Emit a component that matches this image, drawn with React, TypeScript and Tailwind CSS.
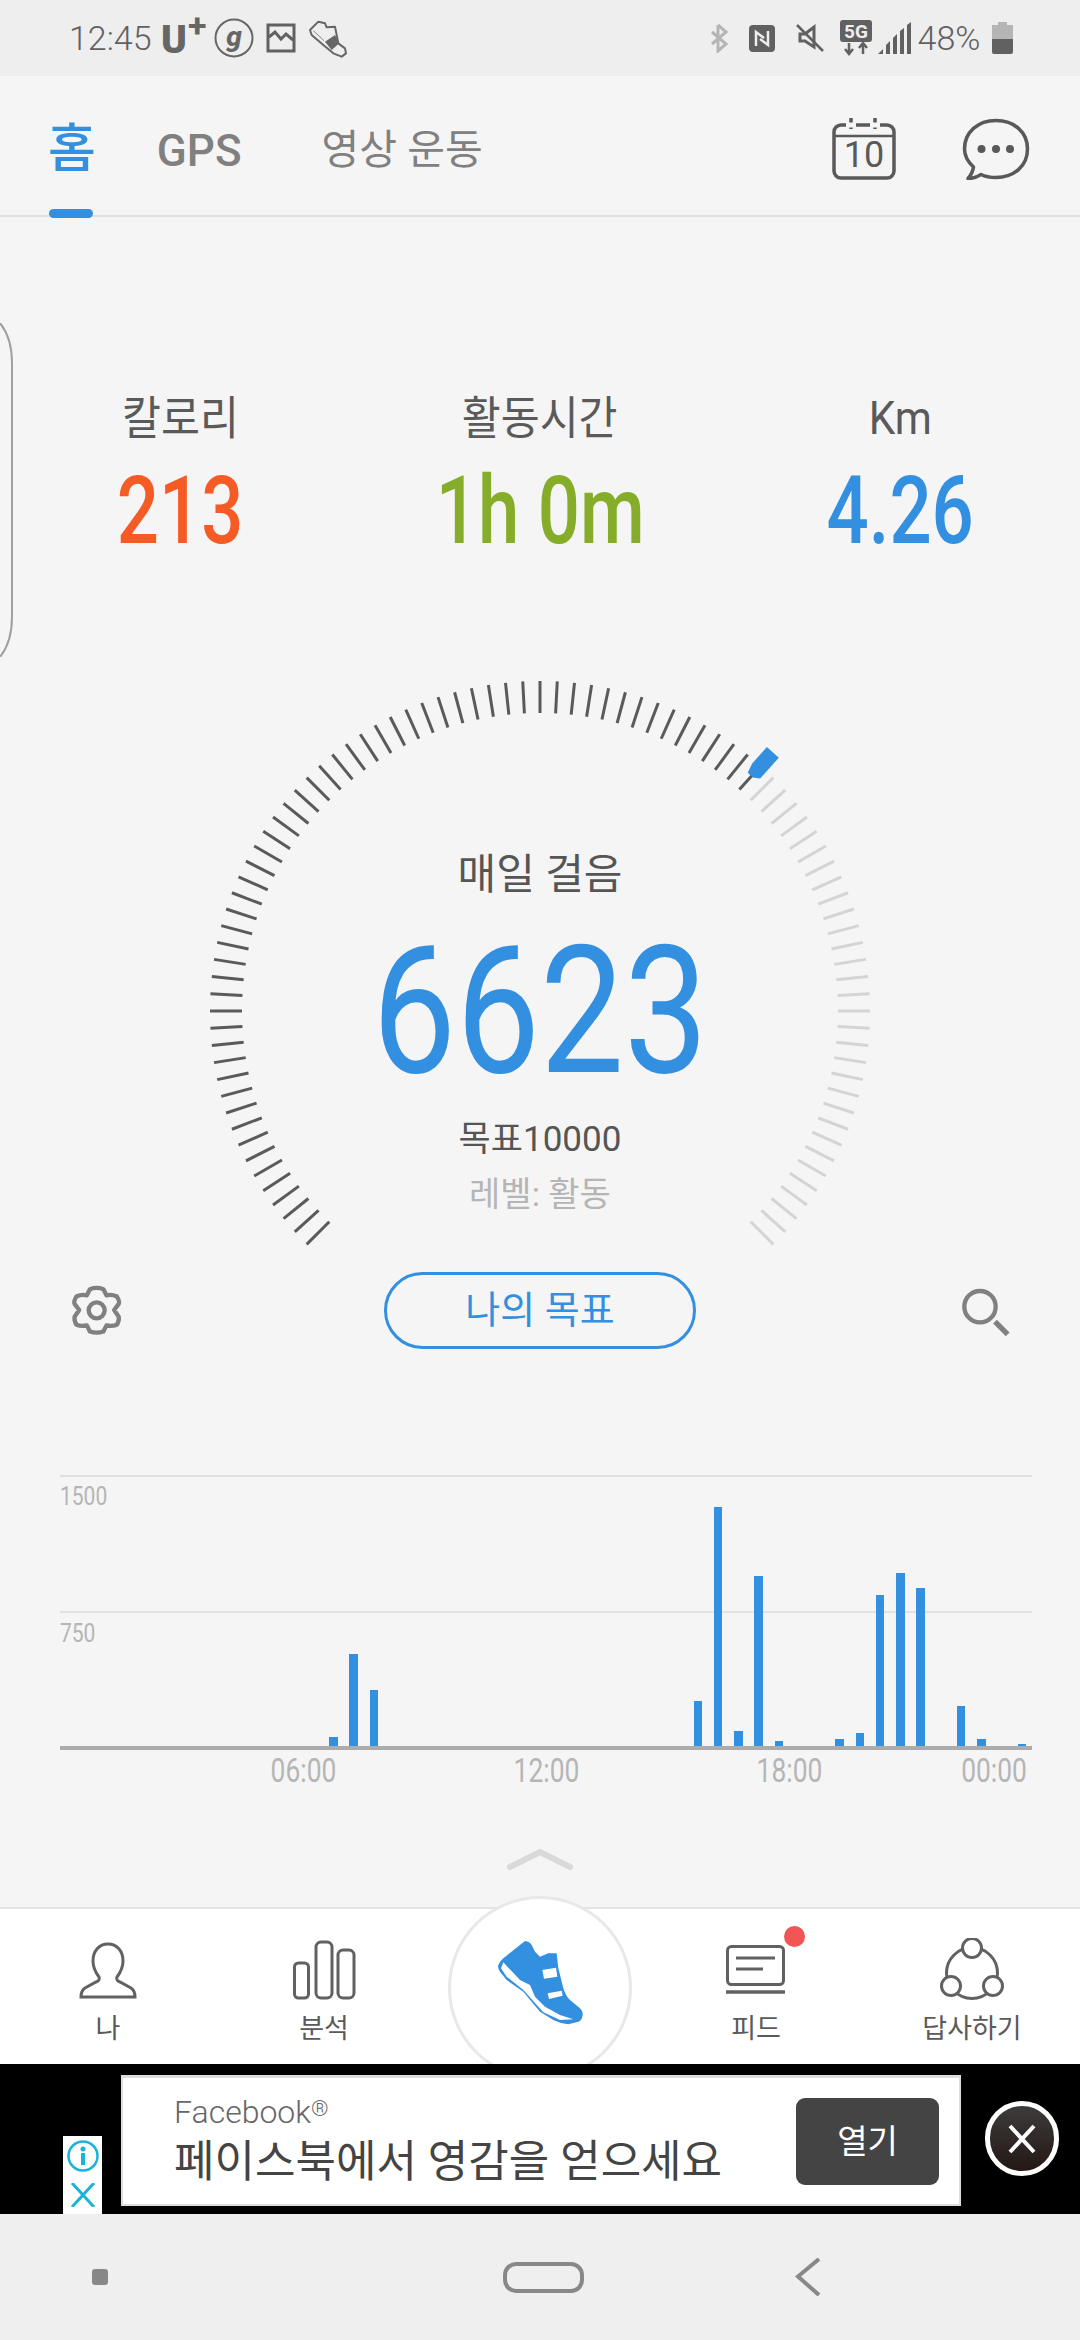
const blue = '#338fe0';

// index of half-hour slot, top of bar in page px (baseline is 1746)
const bars: [number, number][] = [
  [13, 1737], [14, 1654], [15, 1690], [31, 1701], [32, 1507], [33, 1731], [34, 1576], [35, 1741],
  [38, 1739], [39, 1733], [40, 1595], [41, 1573], [42, 1588], [44, 1706], [45, 1739], [47, 1744],
];

function StatusBar() {
  return (
    <div className="flex h-[76px] items-center bg-[#eeeeee] text-[#616161]">
      <span className="ml-[69px] text-[34px] font-light leading-none">12:45</span>
      <svg width="52" height="68" viewBox="0 0 52 68" className="ml-[9px]">
        <text x="0" y="49" fontSize="39" fontWeight="900" fill="#666">U</text>
        <text x="27" y="33" fontSize="34" fontWeight="700" fill="#666">+</text>
      </svg>
      <svg width="40" height="40" viewBox="0 0 40 40" className="ml-[1px]">
        <circle cx="20" cy="20" r="18.5" fill="none" stroke="#666" strokeWidth="2" />
        <text x="20" y="28" fontSize="28" fontWeight="800" fontStyle="italic" textAnchor="middle" fill="#666">g</text>
      </svg>
      <svg width="30" height="30" viewBox="0 0 30 30" className="ml-[12px]">
        <rect x="2" y="2" width="26" height="26" fill="none" stroke="#616161" strokeWidth="3" />
        <path d="M3 14 L9 9 L15 16 L20 11 L27 17" fill="none" stroke="#616161" strokeWidth="3" />
      </svg>
      <svg width="60" height="56" viewBox="0 0 180 168" className="ml-[4px]">
        <path d="M30 60 L55 35 L75 40 L80 52 L105 50 L115 100 L135 115 L138 130 L125 140 L100 130 L70 105 L35 75 Z" fill="none" stroke="#666" strokeWidth="6" strokeLinejoin="round" />
        <path d="M75 95 L105 75 L118 100 L95 120 Z" fill="#666" />
        <path d="M40 62 L72 92" fill="none" stroke="#888" strokeWidth="3" />
      </svg>

      <svg width="20" height="30" viewBox="0 0 20 30" className="ml-[349px]">
        <path d="M9 2 V28 L17 21 L3 9 M9 2 L17 9 L3 21" fill="none" stroke="#b5b5b5" strokeWidth="3" />
      </svg>
      <svg width="26" height="27" viewBox="0 0 26 27" className="ml-[20px]">
        <rect width="26" height="27" rx="4" fill="#616161" />
        <path d="M7 21 V7 L15 13 M19 6 V20 L11 14" fill="none" stroke="#eee" strokeWidth="2.5" />
      </svg>
      <svg width="28" height="28" viewBox="0 0 28 28" className="ml-[21px]">
        <path d="M4 10 H9 L18 3 V23 L9 17 H4 Z" fill="none" stroke="#616161" strokeWidth="3" />
        <path d="M1 1 L27 27" stroke="#616161" strokeWidth="2.5" />
      </svg>
      <svg width="32" height="36" viewBox="0 0 32 36" className="ml-[16px]">
        <rect width="32" height="22" rx="3" fill="#616161" />
        <text x="16" y="18" fontSize="19" fontWeight="700" textAnchor="middle" fill="#eee">5G</text>
        <path d="M9 23 V34 M5 29 L9 34 L13 29 M23 34 V23 M19 28 L23 23 L27 28" fill="none" stroke="#616161" strokeWidth="2.5" />
      </svg>
      <svg width="33" height="32" viewBox="0 0 33 32" className="ml-[6px]">
        <path d="M0 32 L5 27 V32 Z M8 32 V23 L12 19 V32 Z M15 32 V16 L19 12 V32 Z M22 32 V9 L26 6 V32 Z M29 32 V3 L33 0 V32 Z" fill="#616161" />
      </svg>
      <span className="ml-[7px] text-[34px] font-light leading-none">48%</span>
      <div className="ml-[12px] flex flex-col items-center">
        <div className="h-[3px] w-[9px] bg-[#b5b5b5]" />
        <div className="h-[14px] w-[21px] bg-[#b5b5b5]" />
        <div className="h-[15px] w-[21px] rounded-b-[2px] bg-[#616161]" />
      </div>
    </div>
  );
}

function Header() {
  return (
    <div className="relative flex h-[141px] items-center border-b-2 border-[#e0e0e0] text-[#808080]">
      <span className="ml-[48px] mt-[8px] text-[52px] font-medium leading-none text-[#338fe0]">홈</span>
      <span className="ml-[61px] mt-[10px] text-[44px] font-medium leading-none">GPS</span>
      <span className="ml-[80px] mt-[10px] text-[41px] leading-none">영상 운동</span>
      <svg width="64" height="62" viewBox="0 0 64 62" className="ml-auto mt-[6px]">
        <rect x="2" y="7" width="60" height="53" rx="7" fill="none" stroke="#595959" strokeWidth="3.5" />
        <path d="M2 18 H62" stroke="#595959" strokeWidth="2.5" />
        <path d="M19 0 V11 M43 0 V11" stroke="#595959" strokeWidth="3.5" />
        <path d="M14 7 H24 M38 7 H48" stroke="#f5f5f5" strokeWidth="5" />
        <text x="32" y="49" fontSize="36" textAnchor="middle" fill="#595959">10</text>
      </svg>
      <svg width="68" height="62" viewBox="0 0 68 62" className="ml-[66px] mr-[50px] mt-[6px]">
        <path d="M11.5 49 C5 43 2.5 37 2.5 31 C2.5 14 16 2.5 34 2.5 C52 2.5 65.5 14 65.5 31 C65.5 48 52 59.5 34 59.5 C28 59.5 23 58.5 19 56.5 C15 59 10 60.5 6 60.5 C9 57 11 53 11.5 49 Z" fill="none" stroke="#595959" strokeWidth="3.5" strokeLinejoin="round" />
        <circle cx="19.5" cy="31" r="4" fill="#595959" />
        <circle cx="34" cy="31" r="4" fill="#595959" />
        <circle cx="48" cy="31" r="4" fill="#595959" />
      </svg>
      <div className="absolute bottom-[-3px] left-[49px] h-[9px] w-[44px] rounded-full bg-[#338fe0]" />
    </div>
  );
}

function Stat({ label, value, color }: { label: string; value: string; color: string }) {
  return (
    <div className="flex flex-col items-center">
      <div className="h-[50px] scale-x-[0.92] text-[46px] leading-[50px] text-[#5a5a5a]">{label}</div>
      <div className={`mt-[28px] h-[80px] scale-x-[0.79] text-[94px] font-medium leading-[80px] ${color}`}>{value}</div>
    </div>
  );
}

function Gauge() {
  const ticks = [];
  for (let i = 0; i <= 90; i++) {
    const deg = -135 + i * 3;
    ticks.push(
      <line
        key={i}
        x1="0"
        y1="-298"
        x2="0"
        y2="-330"
        transform={`rotate(${deg})`}
        stroke={deg <= 42 ? '#5a5a5a' : '#d4d4d4'}
        strokeWidth="3"
      />,
    );
  }
  return (
    <div className="relative mx-auto mt-[100px] h-[600px] w-[720px]">
      <svg width="720" height="600" viewBox="-360 -360 720 600" className="block">
        {ticks}
        <path d="M-8 -348 H8 V-320 L2 -316 H-5 L-8 -326 Z" transform="rotate(42)" fill={blue} />
      </svg>
      {/* 게이지 안쪽 텍스트 */}
      <div className="absolute inset-x-0 top-[199px] flex flex-col items-center">
        <div className="h-[50px] text-[42px] leading-[50px] text-[#555]">매일 걸음</div>
        <div className="mt-[26px] h-[170px] scale-x-[0.84] text-[178px] font-[450] leading-[170px] text-[#338fe0]">6623</div>
        <div className="mt-[22px] h-[44px] text-[35px] leading-[44px] text-[#555]">목표10000</div>
        <div className="mt-[10px] h-[44px] text-[34px] leading-[44px] text-[#b5b5b5]">레벨: 활동</div>
      </div>
    </div>
  );
}

function GoalRow() {
  return (
    <div className="mt-[19px] flex h-[80px] items-center justify-between px-[50px]">
      <svg width="90" height="80" viewBox="0 0 270 240">
        <path
          transform="translate(140 121) scale(0.92) translate(-140 -121)"
          d="M118 52 Q140 44 162 52 L172 72 Q190 68 206 76 Q216 92 212 100 L197 120 L212 142 Q214 156 206 168 Q190 174 172 170 L162 190 Q140 198 118 190 L108 170 Q90 174 74 168 Q66 156 68 142 L83 120 L68 100 Q64 92 74 76 Q90 68 108 72 Z"
          fill="none"
          stroke="#808080"
          strokeWidth="14"
          strokeLinejoin="round"
        />
        <circle cx="140" cy="121" r="24" fill="none" stroke="#808080" strokeWidth="13" />
      </svg>
      <div className="flex h-[77px] w-[312px] items-center justify-center rounded-full border-[3px] border-[#338fe0] text-[38px] leading-none text-[#338fe0]">
        나의 목표
      </div>
      <svg width="90" height="80" viewBox="0 0 270 240">
        <circle cx="120" cy="110" r="47" fill="none" stroke="#808080" strokeWidth="13" />
        <path d="M165 155 L203 193" stroke="#808080" strokeWidth="16" />
      </svg>
    </div>
  );
}

function Chart() {
  return (
    <div className="mx-[60px] mt-[125px] w-[972px]">
      <div className="relative h-[275px] border-t-2 border-b-4 border-t-[#e0e0e0] border-b-[#ababab]">
        <div className="absolute inset-x-0 top-[134px] h-[2px] bg-[#e2e2e2]" />
        <span className="absolute left-0 top-[5px] origin-left scale-x-[0.84] text-[25px] leading-[30px] text-[#b5b5b5]">1500</span>
        <span className="absolute left-0 top-[142px] origin-left scale-x-[0.84] text-[25px] leading-[30px] text-[#b5b5b5]">750</span>
        <div className="relative flex h-full items-end">
          {Array.from({ length: 48 }).map((_, i) => {
            const bar = bars.find((b) => b[0] === i);
            return (
              <div key={i} className="flex flex-1 justify-center">
                {bar && <div className="w-[8.5px] bg-[#338fe0]" style={{ height: 1746 - bar[1] }} />}
              </div>
            );
          })}
        </div>
      </div>
      <div className="mt-[3px] flex pl-[121.5px] text-[33px] leading-[36px] text-[#b5b5b5]">
        <span className="w-[243px] scale-x-[0.8] text-center">06:00</span>
        <span className="w-[243px] scale-x-[0.8] text-center">12:00</span>
        <span className="w-[243px] scale-x-[0.8] text-center">18:00</span>
        <span className="w-[121.5px] origin-right scale-x-[0.8] whitespace-nowrap pr-[7px] text-right">00:00</span>
      </div>
    </div>
  );
}

function NavItem({ label, children }: { label: string; children: React.ReactNode }) {
  return (
    <div className="relative flex flex-col items-center pt-[29px]">
      {children}
      <span className="mt-[13px] text-[27px] leading-[28px] text-[#5a5a5a]">{label}</span>
    </div>
  );
}

function BottomNav() {
  const line = { fill: 'none', stroke: '#616161', strokeWidth: 3 };
  return (
    <div className="relative grid h-[157px] grid-cols-5 border-t-2 border-[#e4e4e4] bg-white">
      <NavItem label="나">
        <svg width="64" height="64" viewBox="0 0 64 64">
          <path {...line} transform="translate(3 3)" d="M29 3 C38 3 44 10 44 20 C44 27 41 32 38 36 C37 38 38 40 41 41 L52 47 C55 49 56 52 56 56 L2 56 C2 52 3 49 6 47 L17 41 C20 40 21 38 20 36 C17 32 14 27 14 20 C14 10 20 3 29 3 Z" />
        </svg>
      </NavItem>
      <NavItem label="분석">
        <svg width="64" height="64" viewBox="0 0 64 64">
          <rect {...line} x="2.5" y="25" width="14" height="35" rx="4" />
          <rect {...line} x="24" y="4" width="16" height="56" rx="5" />
          <rect {...line} x="46" y="12" width="16" height="48" rx="5" />
        </svg>
      </NavItem>
      <div className="relative">
        <div className="absolute left-1/2 top-[-13px] flex h-[184px] w-[184px] -translate-x-1/2 items-center justify-center rounded-full border-[3px] border-[#e8e8e8] bg-white">
          <svg width="120" height="110" viewBox="0 0 360 330" className="mb-[16px]">
            <path d="M135 48 Q150 50 155 60 L165 80 L180 95 L205 85 L230 85 L235 130 L250 190 Q258 215 270 225 L300 250 Q310 260 308 270 Q305 288 295 290 L265 298 Q240 295 220 285 L180 260 L130 200 L80 165 L60 140 Q52 128 55 120 Q60 108 70 100 Z" fill="#338fe0" />
            <path d="M70 112 L120 165 L150 180 L165 215 L195 245 L240 270 L280 283 L240 285 L190 262 L130 195 L80 155 L63 130 Z" fill="#fff" />
            <path d="M187 135 L228 128 L232 155 L192 161 Z M203 205 L245 197 L248 212 L207 222 Z" fill="#fff" />
          </svg>
        </div>
      </div>
      <NavItem label="피드">
        <svg width="64" height="64" viewBox="0 0 64 64">
          <rect {...line} x="3.5" y="8.5" width="56" height="38" rx="4" />
          <path d="M12 20 H51 M12 31 H39" fill="none" stroke="#616161" strokeWidth="3" />
          <path d="M2 54 H61" fill="none" stroke="#616161" strokeWidth="3.5" />
        </svg>
        <div className="absolute left-[136px] top-[17px] h-[21px] w-[21px] rounded-full bg-[#f25555]" />
      </NavItem>
      <NavItem label="답사하기">
        <svg width="64" height="64" viewBox="0 0 64 64">
          <circle {...line} cx="32" cy="35" r="25.5" />
          <circle {...line} cx="32" cy="10" r="9.5" fill="#fff" />
          <circle {...line} cx="11" cy="48" r="9.5" fill="#fff" />
          <circle {...line} cx="53" cy="48" r="9.5" fill="#fff" />
        </svg>
      </NavItem>
    </div>
  );
}

function AdBanner() {
  return (
    <div className="relative z-10 flex h-[150px] bg-black">
      <div className="ml-[63px] flex h-[78px] w-[39px] flex-col items-center self-end bg-white">
        <svg width="32" height="32" viewBox="0 0 32 32" className="mt-[4px]">
          <circle cx="16" cy="16" r="14.5" fill="none" stroke="#1ab4d8" strokeWidth="2.5" />
          <circle cx="16" cy="9" r="2.5" fill="#1ab4d8" />
          <path d="M16 13 V25" stroke="#1ab4d8" strokeWidth="4" />
        </svg>
        <svg width="26" height="24" viewBox="0 0 26 24" className="mt-[11px]">
          <path d="M2 0 L24 24 M24 0 L2 24" stroke="#1ab4d8" strokeWidth="3" />
        </svg>
      </div>
      <div className="ml-[19px] mt-[11px] flex h-[131px] w-[840px] items-center border-2 border-t-[3px] border-[#dddddd] bg-white pl-[51px] pr-[20px]">
        <div className="flex-1">
          <div className="text-[32px] font-light leading-[34px] text-[#666]">
            Facebook<span className="align-[7px] text-[22px] leading-none">®</span>
          </div>
          <div className="mt-[8px] whitespace-nowrap text-[44px] leading-[50px] text-[#444]">페이스북에서 영감을 얻으세요</div>
        </div>
        <div className="flex h-[87px] w-[143px] items-center justify-center rounded-[9px] bg-[#444] text-[33px] leading-none text-white">
          열기
        </div>
      </div>
      <div className="ml-[24px] mt-[37px] flex h-[75px] w-[74px] items-center justify-center rounded-full border-[5px] border-white bg-gradient-to-b from-[#3c3c3c] to-[#231815]">
        <svg width="30" height="30" viewBox="0 0 30 30">
          <path d="M3 2 L27 28 M27 2 L3 28" stroke="#fff" strokeWidth="4" />
        </svg>
      </div>
    </div>
  );
}

function SystemNav() {
  return (
    <div className="flex h-[126px] items-center bg-[#efefef]">
      <div className="ml-[92px] h-[16px] w-[16px] rounded-[3px] bg-[#888]" />
      <div className="ml-[395px] h-[31px] w-[81px] rounded-[13px] border-[4px] border-[#888]" />
      <svg width="26" height="38" viewBox="0 0 26 38" className="ml-[211px]">
        <path d="M24 1 L3 18.5 L24 37" fill="none" stroke="#888" strokeWidth="4" />
      </svg>
    </div>
  );
}

export default function App() {
  return (
    <div className="flex h-[2340px] w-[1080px] flex-col overflow-hidden bg-[#f5f5f5] font-['Roboto','Noto_Sans_CJK_KR',sans-serif]">
      <StatusBar />
      <Header />
      <div className="relative flex-1">
        {/* 왼쪽 손잡이 */}
        <svg width="14" height="334" viewBox="0 0 14 334" className="absolute left-0 top-[106px]">
          <path d="M0 0 C8 10 12 24 12 40 V294 C12 310 8 324 0 334" fill="none" stroke="#a0a0a0" strokeWidth="2" />
        </svg>
        <div className="pt-[176px]">
          <div className="grid grid-cols-3">
            <Stat label="칼로리" value="213" color="text-[#f65a25]" />
            <Stat label="활동시간" value="1h 0m" color="text-[#85ad2a]" />
            <Stat label="Km" value="4.26" color="text-[#338fe0]" />
          </div>
          <Gauge />
          <GoalRow />
          <Chart />
          <svg width="72" height="26" viewBox="0 0 72 26" className="mx-auto mt-[57px] block">
            <path d="M6 21 L36 6 L66 21" fill="none" stroke="#d9d9d9" strokeWidth="6" strokeLinecap="round" strokeLinejoin="round" />
          </svg>
        </div>
      </div>
      <BottomNav />
      <AdBanner />
      <SystemNav />
    </div>
  );
}
